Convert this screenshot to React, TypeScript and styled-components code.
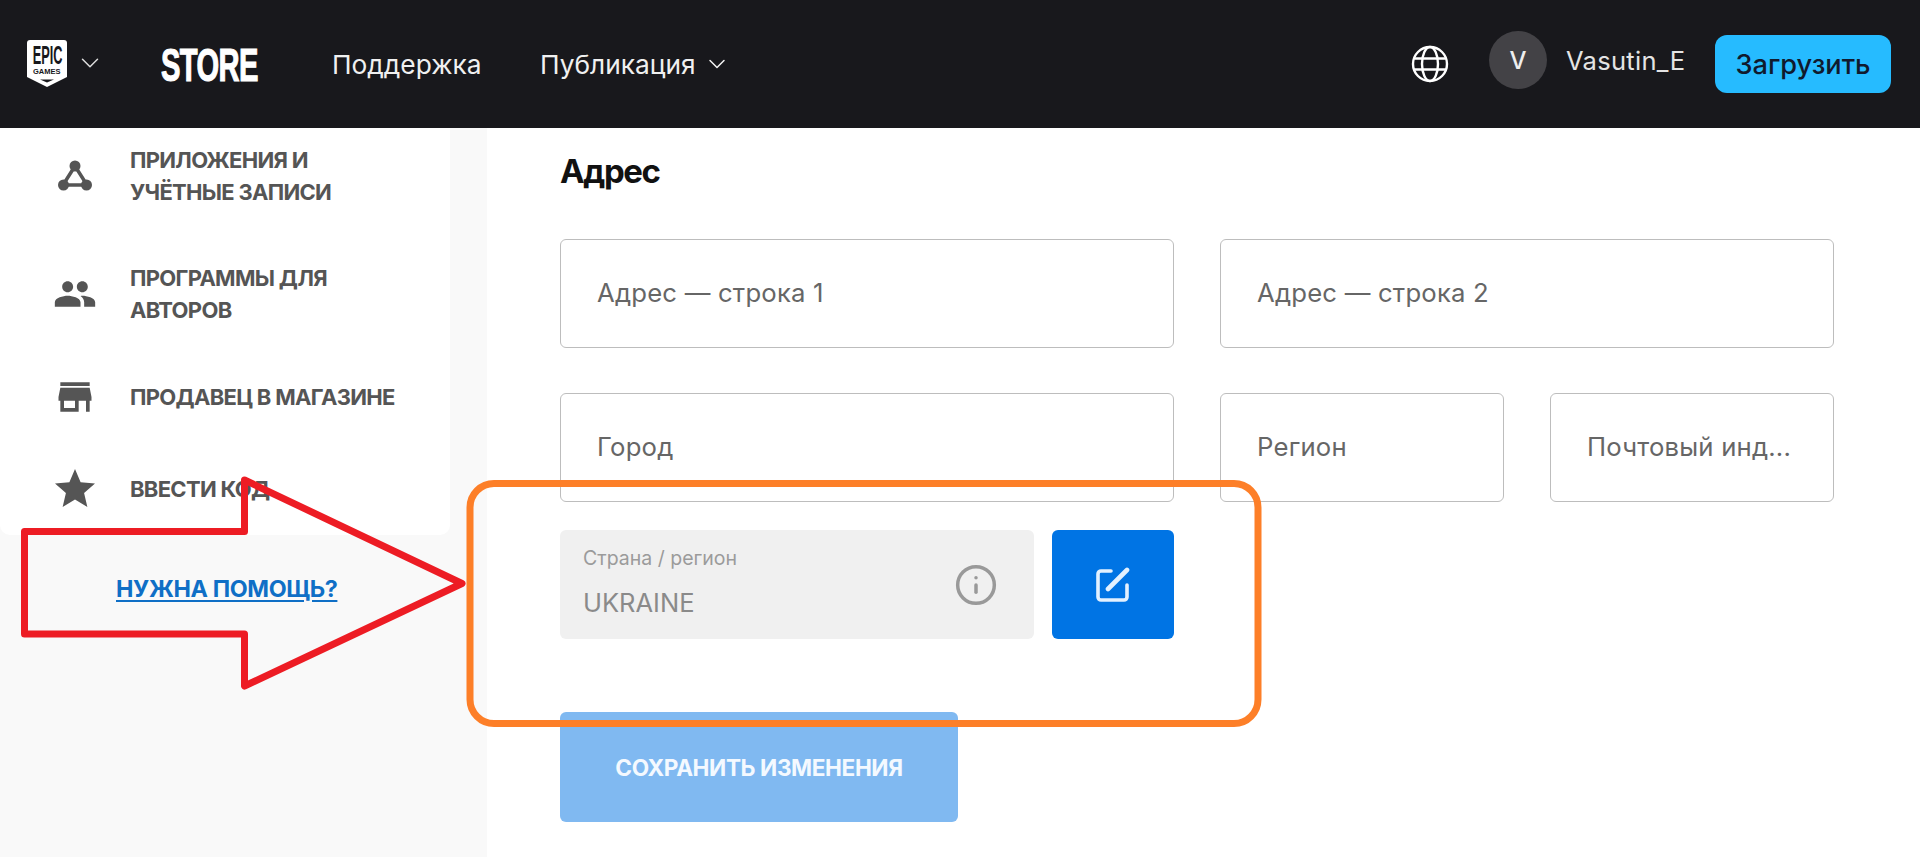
import { ChevronDown, Info } from "lucide-react";
import { MdPeople, MdStar, MdStore } from "react-icons/md";
import styled, { createGlobalStyle } from "styled-components";

const GlobalStyle = createGlobalStyle`
  html, body {
    margin: 0;
    height: 857px;
    overflow: hidden;
    background: #fff;
    font-family: Inter, "Noto Sans", sans-serif;
  }
  * { box-sizing: border-box; }
`;

const Page = styled.div`
  position: relative;
  width: 1920px;
  height: 857px;
  overflow: hidden;
`;

const Header = styled.header`
  display: flex;
  align-items: center;
  height: 128px;
  padding: 0 29px 0 27px;
  background: #18181c;
  color: #f5f5f5;
`;

const LogoWrap = styled.div`
  display: flex;
  align-items: center;
  gap: 8px;
  width: 134px;
  margin-top: -2px;
  color: #ddd;
`;

const StoreLabel = styled.span`
  display: block;
  width: 97px;
  margin-right: 74px;
  font-family: "Liberation Sans", sans-serif;
  font-size: 47px;
  font-weight: 700;
  line-height: 1;
  letter-spacing: -1px;
  white-space: nowrap;
  color: #fff;
  -webkit-text-stroke: 1.2px #fff;
  transform: scaleX(0.62);
  transform-origin: left center;
`;

const NavLink = styled.span<{ $width: number }>`
  display: flex;
  align-items: center;
  gap: 7px;
  width: ${(p) => p.$width}px;
  font-size: 26.3px;
  color: #f0f0f0;
  white-space: nowrap;
`;

const HeaderRight = styled.div`
  display: flex;
  align-items: center;
  margin-left: auto;
`;

const GlobeIcon = styled.svg`
  width: 38px;
  height: 38px;
  margin-right: 40px;
  color: #fff;
`;

const Avatar = styled.div`
  display: flex;
  align-items: center;
  justify-content: center;
  width: 58px;
  height: 58px;
  margin: 0 19px 8px 0;
  border-radius: 50%;
  background: #434246;
  font-size: 24px;
  font-weight: 500;
  color: #eee;
`;

const UserName = styled.span`
  width: 149px;
  margin-bottom: 7px;
  font-size: 25.5px;
  letter-spacing: 0.3px;
  color: #e4e4e4;
  white-space: nowrap;
`;

const UploadButton = styled.button`
  width: 176px;
  height: 58px;
  border: 0;
  border-radius: 12px;
  background: #26bbff;
  font-family: inherit;
  font-size: 27.2px;
  font-weight: 500;
  color: #101a2e;
`;

const Body = styled.div`
  display: flex;
  height: 729px;
`;

const Sidebar = styled.aside`
  flex: none;
  width: 487px;
  background: #f9f9f9;
`;

const SideCard = styled.nav`
  width: 450px;
  height: 407px;
  padding-top: 16px;
  border-radius: 0 0 10px 10px;
  background: #fff;
`;

const SideItem = styled.a<{ $height: number; $top: number }>`
  display: flex;
  align-items: center;
  height: ${(p) => p.$height}px;
  margin-top: ${(p) => p.$top}px;
  font-size: 22px;
  font-weight: 700;
  line-height: 32px;
  letter-spacing: -0.7px;
  color: #555;
`;

const SideIcon = styled.span`
  display: flex;
  align-items: center;
  justify-content: center;
  flex: none;
  width: 50px;
  margin: 0 30px 0 50px;
  color: #555;
`;

const HelpLink = styled.a`
  display: block;
  margin-top: 39px;
  padding-left: 116px;
  font-size: 23.3px;
  font-weight: 700;
  line-height: 30px;
  letter-spacing: -0.35px;
  color: #0f6fc6;
  text-decoration: underline;
  text-underline-offset: 3px;
`;

const Main = styled.main`
  flex: 1;
  padding: 25px 0 0 73px;
`;

const Title = styled.h2`
  margin: 0 0 50px;
  font-size: 33px;
  font-weight: 700;
  line-height: 36px;
  letter-spacing: -1.4px;
  color: #111;
`;

const Form = styled.form`
  display: flex;
  flex-direction: column;
  width: 1274px;
`;

const FieldGroup = styled.div`
  display: grid;
  grid-auto-flow: column;
  grid-auto-columns: minmax(0, 1fr);
  gap: 46px;
`;

const FieldRow = styled(FieldGroup)`
  margin-bottom: 45px;
`;

const Field = styled.div`
  display: flex;
  align-items: center;
  height: 109px;
  padding: 0 35px 2px 36px;
  border: 1px solid #bdbdbd;
  border-radius: 6px;
`;

const FieldLabel = styled.span`
  font-size: 25.7px;
  letter-spacing: 0.2px;
  color: #666;
  white-space: nowrap;
`;

const CountryRow = styled.div`
  display: flex;
  gap: 18px;
  width: 614px;
  margin-top: -17px;
  margin-bottom: 73px;
`;

const CountryBox = styled.div`
  display: flex;
  align-items: center;
  justify-content: space-between;
  width: 474px;
  height: 109px;
  padding: 0 36px 0 23px;
  border-radius: 6px;
  background: #f0f0f0;
  color: #999;
`;

const CountryText = styled.div`
  display: flex;
  flex-direction: column;
  gap: 19px;
  padding-bottom: 6px;
`;

const CountryLabel = styled.span`
  font-size: 19.5px;
  line-height: 22px;
  color: #9b9b9b;
`;

const CountryValue = styled.span`
  font-size: 25.5px;
  line-height: 29px;
  color: #8a8a8a;
`;

const EditButton = styled.button`
  display: flex;
  align-items: center;
  justify-content: center;
  width: 122px;
  height: 109px;
  border: 0;
  border-radius: 6px;
  background: #0074e4;
  color: #e3f1ff;
`;

const SaveButton = styled.button`
  width: 398px;
  height: 110px;
  border: 0;
  border-radius: 6px;
  background: #80b9f1;
  font-family: inherit;
  font-size: 22.6px;
  font-weight: 700;
  letter-spacing: -0.4px;
  color: #f4f9ff;
`;

const Annotations = styled.svg`
  position: absolute;
  top: 0;
  left: 0;
  pointer-events: none;
`;

const EpicLogo = () => (
  <svg width="40" height="47" viewBox="0 0 40 47">
    <path
      d="M3 0h34a3 3 0 0 1 3 3v34l-20 10-20-10V3a3 3 0 0 1 3-3z"
      fill="#fff"
    />
    <text
      transform="translate(5.7 24) scale(0.51 1)"
      fontFamily="Liberation Sans"
      fontWeight="700"
      fontSize="25"
      fill="#18181c"
    >
      EPIC
    </text>
    <text
      x="6"
      y="34"
      fontFamily="Liberation Sans"
      fontWeight="700"
      fontSize="7.5"
      fill="#18181c"
    >
      GAMES
    </text>
    <path d="M13 39.5h14l-7 3z" fill="#18181c" />
  </svg>
);

const NodesIcon = () => (
  <svg width="36" height="32" viewBox="0 0 36 32" fill="currentColor">
    <path
      d="M18 6 6 25h24z"
      fill="none"
      stroke="currentColor"
      strokeWidth="3.5"
    />
    <circle cx="18" cy="6" r="5.5" />
    <circle cx="6.5" cy="25" r="5.5" />
    <circle cx="29.5" cy="25" r="5.5" />
  </svg>
);

const EditIcon = () => (
  <svg
    width="36"
    height="36"
    viewBox="0 0 36 36"
    fill="none"
    stroke="currentColor"
    strokeWidth="3.6"
    strokeLinecap="round"
    strokeLinejoin="round"
  >
    <path d="M16 4H6a3 3 0 0 0-3 3v23a3 3 0 0 0 3 3h23a3 3 0 0 0 3-3V18" />
    <path d="M32 3 13 22" strokeWidth="4.6" />
  </svg>
);

const App = () => (
  <Page>
    <GlobalStyle />
    <Header>
      <LogoWrap>
        <EpicLogo />
        <ChevronDown size={30} strokeWidth={1.2} />
      </LogoWrap>
      <StoreLabel>STORE</StoreLabel>
      <NavLink $width={208}>Поддержка</NavLink>
      <NavLink $width={200}>
        Публикация
        <ChevronDown size={28} strokeWidth={1.3} />
      </NavLink>
      <HeaderRight>
        <GlobeIcon viewBox="0 0 38 38" fill="none" stroke="currentColor" strokeWidth="2.4">
          <circle cx="19" cy="19" r="17" />
          <ellipse cx="19" cy="19" rx="8" ry="17" />
          <path d="M3.5 13.5h31M3.5 24.5h31" />
        </GlobeIcon>
        <Avatar>V</Avatar>
        <UserName>Vasutin_E</UserName>
        <UploadButton>Загрузить</UploadButton>
      </HeaderRight>
    </Header>
    <Body>
      <Sidebar>
        <SideCard>
          <SideItem $height={64} $top={0}>
            <SideIcon>
              <NodesIcon />
            </SideIcon>
            <span>
              ПРИЛОЖЕНИЯ И
              <br />
              УЧЁТНЫЕ ЗАПИСИ
            </span>
          </SideItem>
          <SideItem $height={64} $top={54}>
            <SideIcon>
              <MdPeople size={44} />
            </SideIcon>
            <span>
              ПРОГРАММЫ ДЛЯ
              <br />
              АВТОРОВ
            </span>
          </SideItem>
          <SideItem $height={32} $top={55}>
            <SideIcon>
              <MdStore size={44} />
            </SideIcon>
            <span>ПРОДАВЕЦ В МАГАЗИНЕ</span>
          </SideItem>
          <SideItem $height={32} $top={60}>
            <SideIcon>
              <MdStar size={48} />
            </SideIcon>
            <span>ВВЕСТИ КОД</span>
          </SideItem>
        </SideCard>
        <HelpLink>НУЖНА ПОМОЩЬ?</HelpLink>
      </Sidebar>
      <Main>
        <Title>Адрес</Title>
        <Form>
          <FieldRow>
            <Field>
              <FieldLabel>Адрес — строка 1</FieldLabel>
            </Field>
            <Field>
              <FieldLabel>Адрес — строка 2</FieldLabel>
            </Field>
          </FieldRow>
          <FieldRow>
            <Field>
              <FieldLabel>Город</FieldLabel>
            </Field>
            <FieldGroup>
              <Field>
                <FieldLabel>Регион</FieldLabel>
              </Field>
              <Field>
                <FieldLabel>Почтовый инд...</FieldLabel>
              </Field>
            </FieldGroup>
          </FieldRow>
          <CountryRow>
            <CountryBox>
              <CountryText>
                <CountryLabel>Страна / регион</CountryLabel>
                <CountryValue>UKRAINE</CountryValue>
              </CountryText>
              <Info size={44} strokeWidth={1.9} />
            </CountryBox>
            <EditButton type="button">
              <EditIcon />
            </EditButton>
          </CountryRow>
          <div>
            <SaveButton type="button">СОХРАНИТЬ ИЗМЕНЕНИЯ</SaveButton>
          </div>
        </Form>
      </Main>
    </Body>
    <Annotations width="1920" height="857" viewBox="0 0 1920 857" fill="none">
      <rect x="470" y="483.5" width="788" height="240" rx="24" stroke="#fd7f28" strokeWidth="7" />
      <path
        d="M24.5 531.5H244.5V480L462 583.5 244.5 686V634H24.5z"
        stroke="#ed1c24"
        strokeWidth="7"
        strokeLinejoin="round"
      />
    </Annotations>
  </Page>
);

export default App;
